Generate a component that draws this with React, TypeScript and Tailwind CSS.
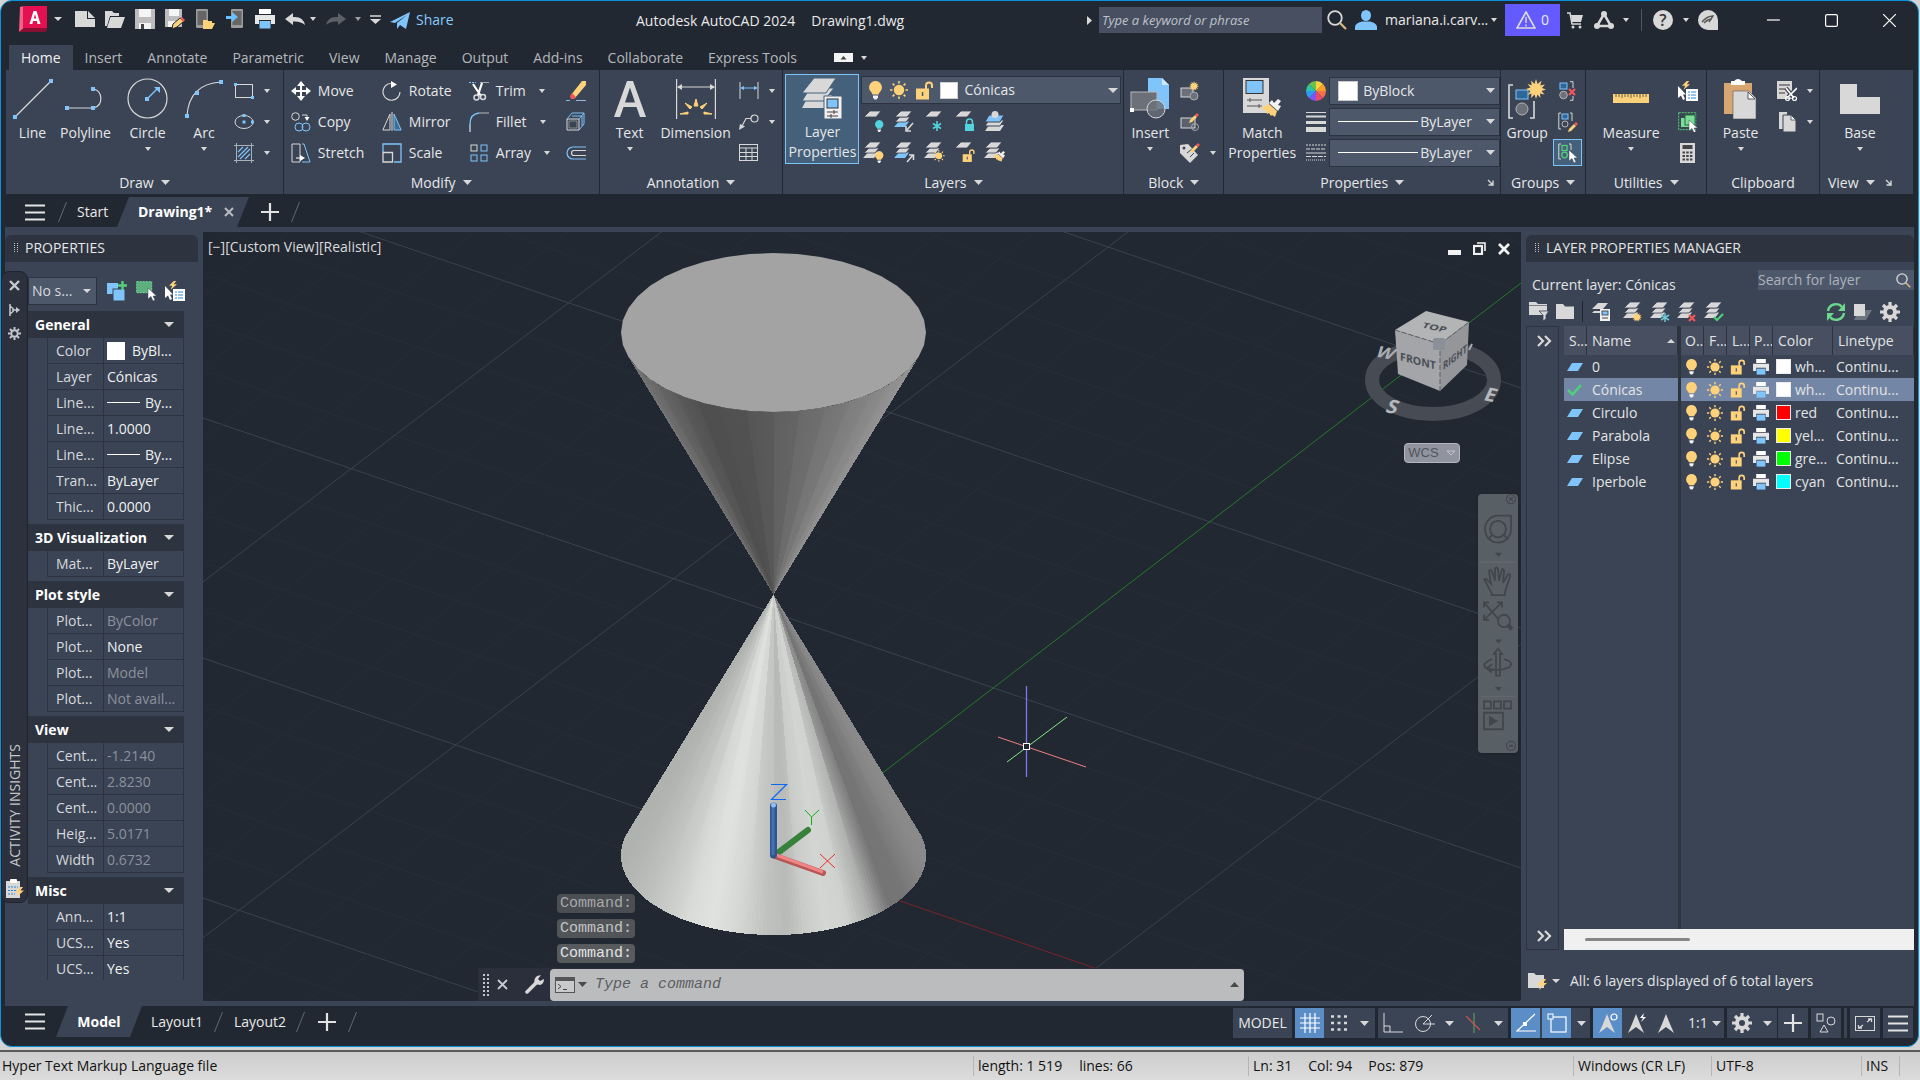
import React from "react";
import type { ReactNode } from "react";

const G = "#d8d8d8";
const B = "#7fc4fb";
const Y = "#fed27b";

type IcProps = { w: number; h: number; vb?: string; children: ReactNode; className?: string };

function Ic({ w, h, vb, children, className = "" }: IcProps) {
  return (
    <svg width={w} height={h} viewBox={vb ?? `0 0 ${w} ${h}`} fill="none" className={`shrink-0 ${className}`} aria-hidden="true">
      {children}
    </svg>
  );
}

function Down({ w = 8, h = 4, color = G }: { w?: number; h?: number; color?: string }) {
  return (
    <Ic w={w} h={h}>
      <path d={`M0 0H${w}L${w / 2} ${h}Z`} fill={color} />
    </Ic>
  );
}

/* ---------- small reusable drawings ---------- */

const Pointer = ({ x, y }: { x: number; y: number }) => (
  <path transform={`translate(${x} ${y})`} d="M0 0V11L3 8.500L5 13L7 12L5 8H8.500Z" fill="#fff" stroke="#3b4454" strokeWidth=".5" />
);

const Pencil = ({ x, y }: { x: number; y: number }) => (
  <g transform={`translate(${x} ${y})`}>
    <path d="M0 10L1 7L6 2L8 4L3 9Z" fill={Y} />
    <path d="M6 2L8 0L10 2L8 4Z" fill="#f0575b" />
  </g>
);

const Bulb = ({ x, y, c = Y, s = 1 }: { x: number; y: number; c?: string; s?: number }) => (
  <g transform={`translate(${x} ${y}) scale(${s})`}>
    <path d="M6.500 0A6.500 6.500 0 0 0 2.500 11.500L3.500 13.500H9.500L10.500 11.500A6.500 6.500 0 0 0 6.500 0Z" fill={c} />
    <path d="M4 14.500H9V16.500L7.500 18.500H5.500L4 16.500Z" fill="#f2f2f2" />
  </g>
);

const Sun = ({ x, y, s = 1 }: { x: number; y: number; s?: number }) => (
  <g transform={`translate(${x} ${y}) scale(${s})`}>
    <circle cx="9" cy="9" r="5.200" fill={Y} />
    <path d="M9 0V2.500M9 15.500V18M0 9H2.500M15.500 9H18M2.600 2.600L4.400 4.400M13.600 13.600L15.400 15.400M15.400 2.600L13.600 4.400M4.400 13.600L2.600 15.400" stroke={Y} strokeWidth="1.600" />
  </g>
);

const OpenLock = ({ x, y, s = 1 }: { x: number; y: number; s?: number }) => (
  <g transform={`translate(${x} ${y}) scale(${s})`}>
    <path d="M11 8V4.500A3 3 0 0 1 17 4.500V7" stroke={Y} strokeWidth="2" />
    <rect x="1" y="7.500" width="13" height="11" fill={Y} />
    <rect x="6.800" y="11" width="1.500" height="4" fill="#4e5a6d" />
  </g>
);

const Sheets = ({ n = 3, last = G }: { n?: number; last?: string }) => (
  <g>
    {n > 2 && <path d="M5 10.500H15L11 16H0Z" fill={last} />}
    {n > 1 && <path d="M6 6H16L12 11H1Z" fill={G} stroke="#3b4454" strokeWidth=".8" />}
    <path d="M7 0H18L13 6H1Z" fill={G} stroke="#3b4454" strokeWidth=".8" />
  </g>
);

const Star = ({ x, y, s = 1 }: { x: number; y: number; s?: number }) => (
  <path
    transform={`translate(${x} ${y}) scale(${s})`}
    d="M10 0L11.600 5L15.500 1.800L14.300 6.500L19 5.500L15.800 9L20 10.500L15.500 12L18.500 15.500L14 14.500L14.500 19L11.500 15.500L10 20L8.500 15.500L5 19L5.500 14.500L1.500 16L4.500 12L0 10L4.500 8.500L1.500 5L5.800 6.200L5 1.500L8.500 5Z"
    fill={Y}
  />
);

const Brush = ({ x, y, s = 1 }: { x: number; y: number; s?: number }) => (
  <g transform={`translate(${x} ${y}) scale(${s})`}>
    <path d="M0 9L8 5L16 12L14 18L11 16L10 17L8 14L6 15L5 12Z" fill={Y} />
    <path d="M8 4L11 1L13 4L17 0L20 2L17 6L20 7L17 12Z" fill="#f2f2f2" />
  </g>
);

const Printer = ({ s = 1 }: { s?: number }) => (
  <g transform={`scale(${s})`}>
    <rect x="4" y="0" width="12" height="5" fill="#fff" />
    <path d="M0 6H20V15H16V11H4V15H0Z" fill="#e6e6e6" />
    <rect x="4.500" y="12" width="11" height="7.500" fill={B} />
  </g>
);

const Bolt = ({ x, y, s = 1 }: { x: number; y: number; s?: number }) => (
  <path transform={`translate(${x} ${y}) scale(${s})`} d="M6 0L0 6H4L2 11L10 4H6L9 0Z" fill={Y} />
);

const Lens = ({ size }: { size: number }) => (
  <Ic w={size} h={size} vb="0 0 20 20">
    <circle cx="8" cy="8" r="6.800" stroke={G} strokeWidth="1.800" />
    <path d="M13 13L19 19" stroke="#d9b680" strokeWidth="2.200" />
  </Ic>
);

const Gear = ({ size }: { size: number }) => (
  <Ic w={size} h={size} vb="0 0 20 20">
    <circle cx="10" cy="10" r="5" stroke={G} strokeWidth="4" />
    <path d="M10 0V4M10 16V20M0 10H4M16 10H20M3 3L6 6M14 14L17 17M17 3L14 6M6 14L3 17" stroke={G} strokeWidth="3.200" />
  </Ic>
);

const QuickSelect = () => (
  <Ic w={20} h={20}>
    <Bolt x={4} y={0} s={0.8} />
    <rect x="8" y="8" width="12" height="12" fill="#fff" />
    <path d="M10 11H12M10 14H12M10 17H12M13 11H18M13 14H18M13 17H18" stroke="#2a87d8" strokeWidth="1.200" />
    <path d="M0 5V17L3 14.500L5 19L7 18L5 13.500H8Z" fill="#fff" />
  </Ic>
);

/* ---------- title bar ---------- */

const iconBtn = "flex h-[30px] w-[30px] items-center justify-center";

function TitleBar() {
  return (
    <header className="flex h-[44px] shrink-0 items-start text-sm text-[#e9e9e9]">
      <div className="flex w-[635px] shrink-0 items-center pt-[2px] pl-[18px]">
        <button aria-label="Application menu" className="mr-2 flex h-[32px] items-center gap-[6px]">
          <Ic w={29} h={26}>
            <path d="M1 1L5 0V22L0 26Z" fill="#f0648a" />
            <path d="M0 26L5 22H28V24L26 26Z" fill="#8a1033" />
            <rect x="4" y="0" width="24" height="22" fill="#e5104f" />
            <path d="M10.500 18L14.500 5H17.500L21.500 18H18.500L17.800 15H14.100L13.300 18ZM14.800 12.500H17.200L16 8Z" fill="#fff" fillRule="evenodd" />
          </Ic>
          <Down />
        </button>
        <button aria-label="New" className={iconBtn}>
          <Ic w={20} h={16}><path d="M0 0H12V8H20V16H0Z" fill={G} /><path d="M13 0L20 7H13Z" fill={G} /></Ic>
        </button>
        <button aria-label="Open" className={iconBtn}>
          <Ic w={20} h={17}><path d="M0 0H7L9 2H14V5H5L2 15H0Z" fill={G} /><path d="M5.500 6H20L16 17H2Z" fill={G} /></Ic>
        </button>
        <button aria-label="Save" className={iconBtn}>
          <Ic w={20} h={20}><path d="M0 0H20V20H0Z" fill="#bdbdbd" /><rect x="4" width="12" height="8" fill="#f5f5f5" /><path d="M4 14H16V20H4Z" fill="#f5f5f5" /><rect x="6" y="15" width="3" height="5" fill="#444" /></Ic>
        </button>
        <button aria-label="Save as" className={iconBtn}>
          <Ic w={20} h={20}><path d="M0 0H17V18H0Z" fill="#bdbdbd" /><rect x="4" width="10" height="7" fill="#f5f5f5" /><path d="M3 12H12V18H3Z" fill="#f5f5f5" /><g><path d="M7 20L8 15L15 9L19 12L12 18Z" fill={Y} stroke="#222831" /><path d="M15 9L17 8L20 11L18.500 13Z" fill="#f0575b" /></g></Ic>
        </button>
        <button aria-label="Open from mobile" className={iconBtn}>
          <Ic w={20} h={20}><rect x="1" width="12" height="19" rx="1" fill="#9b9b9b" /><rect x="2.500" y="2" width="9" height="14" fill="#666" /><path d="M8 11H12L13 12H17V14H20L17 20H8Z" fill={Y} /></Ic>
        </button>
        <button aria-label="Save to mobile" className={iconBtn}>
          <Ic w={18} h={20}><rect x="5" width="12" height="19" rx="1" fill="#9b9b9b" /><rect x="6.500" y="2" width="9" height="14" fill="#666" /><path d="M0 7H6V3L12 8L6 13V10H0Z" fill="#6cc0ff" /></Ic>
        </button>
        <button aria-label="Plot" className={iconBtn}><Ic w={20} h={20}><Printer /></Ic></button>
        <button aria-label="Undo" className={iconBtn}>
          <Ic w={20} h={13}><path d="M0 6L8 0V4Q18 3 20 12Q16 8 8 8.500V12Z" fill={G} /></Ic>
        </button>
        <Down w={6} />
        <button aria-label="Redo" className="ml-[5px] flex h-[30px] w-[30px] items-center justify-center">
          <Ic w={20} h={13}><path d="M20 6L12 0V4Q2 3 0 12Q4 8 12 8.500V12Z" fill="#5c6168" /></Ic>
        </button>
        <span className="ml-[4px]"><Down w={6} color="#a0a0a0" /></span>
        <button aria-label="Customize quick access" className="mr-[9px] ml-[8px] flex h-[30px] w-[12px] items-center justify-center">
          <Ic w={11} h={9}><path d="M0 1H11" stroke={G} strokeWidth="1.500" /><path d="M0 4H11L5.500 9Z" fill={G} /></Ic>
        </button>
        <button className="flex items-center gap-1.5 pt-[2px] text-[#86cbff]">
          <Ic w={20} h={17}><path d="M0 10L20 0L16 17L10 13L7 17V11L17 3L5 11Z" fill={B} /></Ic>
          Share
        </button>
      </div>
      <h1 className="mt-[10px] flex gap-4 font-normal whitespace-nowrap"><span>Autodesk AutoCAD 2024</span><span>Drawing1.dwg</span></h1>
      <div className="ml-auto flex items-center pt-[3px]">
        <Ic w={5} h={9} className="mr-[7px]"><path d="M0 0L5 4.500L0 9Z" fill={G} /></Ic>
        <input aria-label="Search help" placeholder="Type a keyword or phrase" className="h-[26px] w-[223px] bg-[#474f60] px-[3px] text-[13px] italic outline-none placeholder:text-[#bfc3ca]" />
        <button aria-label="Search" className="ml-[5px] flex w-[22px]"><Lens size={20} /></button>
        <button className="ml-[6px] flex items-center gap-2">
          <Ic w={22} h={20}><ellipse cx="11" cy="5.500" rx="5" ry="5.500" fill={B} /><path d="M0 20V17Q0 13 7 11.500H15Q22 13 22 17V20Z" fill={B} /></Ic>
          <span className="w-[98px] text-left">mariana.i.carv...</span>
          <Down w={6} />
        </button>
        <button className="ml-2 flex h-[32px] w-[55px] items-center justify-center gap-[5px] bg-[#635bff]">
          <Ic w={20} h={18}><path d="M10 1L19 17H1Z" stroke="#ddd" strokeWidth="1.600" /><path d="M10 6V12M10 13.500V15.500" stroke="#ddd" strokeWidth="1.400" /></Ic>
          0
        </button>
        <button aria-label="App store" className="ml-[7px]">
          <Ic w={16} h={17}><path d="M0 1H3L5 12H14" stroke={G} strokeWidth="1.500" /><path d="M4 3H16L14 10H5Z" fill={G} /><circle cx="6" cy="15" r="1.500" fill={G} /><circle cx="13" cy="15" r="1.500" fill={G} /></Ic>
        </button>
        <button aria-label="Autodesk app" className="ml-[11px] flex items-center gap-[9px]">
          <Ic w={20} h={18}><path d="M10 3L3 15H17Z" stroke={G} strokeWidth="2.500" /><circle cx="10" cy="3" r="3" fill={G} /><circle cx="3" cy="15" r="3" fill={G} /><circle cx="17" cy="15" r="3" fill={G} /></Ic>
          <Down w={6} />
        </button>
        <span className="ml-[12px] h-[22px] w-px bg-[#4d5665]" />
        <button aria-label="Help" className="ml-[11px] flex items-center gap-[10px]">
          <span className="flex h-[20px] w-[20px] items-center justify-center rounded-full bg-[#d8d8d8] text-base font-semibold text-[#333]">?</span>
          <Down w={6} />
        </button>
        <button aria-label="Assistant" className="ml-[9px]">
          <Ic w={20} h={20}><path d="M10 0A10 10 0 1 0 10 20H20V10A10 10 0 0 0 10 0Z" fill={G} /><path d="M4 12Q9 6 15 6L11 12M6 13Q10 9 14 9" stroke="#555" strokeWidth="1.400" /></Ic>
        </button>
        <button aria-label="Minimize" className="ml-[26px] flex w-[58px] justify-center"><Ic w={13} h={13}><path d="M0 6H13" stroke="#fff" strokeWidth="1.200" /></Ic></button>
        <button aria-label="Maximize" className="flex w-[58px] justify-center"><Ic w={13} h={13}><rect x=".6" y=".6" width="11.800" height="11.800" rx="1.500" stroke="#fff" strokeWidth="1.200" /></Ic></button>
        <button aria-label="Close" className="flex w-[58px] justify-center"><Ic w={13} h={13}><path d="M0 0L13 13M13 0L0 13" stroke="#fff" strokeWidth="1.200" /></Ic></button>
      </div>
    </header>
  );
}

const TABS = ["Insert", "Annotate", "Parametric", "View", "Manage", "Output", "Add-ins", "Collaborate", "Express Tools"];

function RibbonTabs() {
  return (
    <nav className="ml-[8px] flex h-[25px] shrink-0 text-sm text-[#b4b8be]">
      <button className="bg-[#3b4454] px-[12px] text-[#f0f0f0]">Home</button>
      <div className="flex gap-[25px] pl-[12px]">
        {TABS.map((t) => <button key={t}>{t}</button>)}
      </div>
      <button aria-label="Ribbon display" className="ml-[37px] flex items-center gap-[8px]">
        <Ic w={19} h={9}><rect width="19" height="9" fill="#f4f4f4" /><path d="M6.500 6.500L9.500 3L12.500 6.500Z" fill="#444" /></Ic>
        <Down w={6} />
      </button>
    </nav>
  );
}

/* ---------- ribbon ---------- */

type PanelProps = { title: string; className: string; children: ReactNode; caret?: boolean; launcher?: string; titleAlign?: string };

function Panel({ title, className, children, caret = true, launcher, titleAlign = "mx-auto" }: PanelProps) {
  return (
    <section className={`relative flex flex-col border-r border-[#222831] ${className}`}>
      <div className="flex h-[101px] pt-[4px]">{children}</div>
      <button className={`flex h-[23px] items-center gap-[7px] ${titleAlign}`}>
        {title}
        {caret && <Down w={9} h={5} />}
      </button>
      {launcher && (
        <button aria-label={`${title} settings`} className={`absolute bottom-[8px] ${launcher}`}>
          <Ic w={7} h={7}><path d="M1 1L6 6M6 1.500V6H1.500" stroke={G} strokeWidth="1.400" /></Ic>
        </button>
      )}
    </section>
  );
}

function Big({ label, w, caret = false, children }: { label: ReactNode; w: string; caret?: boolean; children: ReactNode }) {
  return (
    <button className={`flex flex-col items-center leading-[20px] ${w}`}>
      <span className="flex h-[49px] items-center justify-center">{children}</span>
      <span>{label}</span>
      {caret && <span className="mt-[4px]"><Down w={6} /></span>}
    </button>
  );
}

const rows = "mt-px grid h-[93px] grid-rows-3 items-center";

function Tool({ label, caret, children }: { label: string; caret?: boolean; children: ReactNode }) {
  return (
    <button className="flex items-center justify-start">
      <span className="mr-[7px] flex w-[20px] justify-center">{children}</span>
      {label}
      {caret && <span className="ml-[13px]"><Down w={6} /></span>}
    </button>
  );
}

function IconCaret({ label, children, caret = true }: { label: string; children: ReactNode; caret?: boolean }) {
  return (
    <button aria-label={label} className="flex items-center gap-[10px]">
      <span className="flex w-[20px] justify-center">{children}</span>
      {caret && <Down w={6} />}
    </button>
  );
}

function DrawPanel() {
  return (
    <Panel title="Draw" className="w-[278px]">
      <Big label="Line" w="w-[53px]">
        <Ic w={42} h={40}><path d="M3 38L39 2" stroke={G} strokeWidth="1.200" /><rect x="1" y="36" width="4" height="4" fill={B} /><rect x="37" y="0" width="4" height="4" fill={B} /></Ic>
      </Big>
      <Big label="Polyline" w="w-[53px]">
        <Ic w={42} h={26}><path d="M2 22H29A10 10 0 0 0 29 3" stroke={G} strokeWidth="1.200" /><rect x="0" y="20" width="4" height="4" fill={B} /><rect x="26" y="20" width="4" height="4" fill={B} /><rect x="26" y="1" width="4" height="4" fill={B} /></Ic>
      </Big>
      <Big label="Circle" w="w-[71px]" caret>
        <Ic w={41} h={41}><circle cx="20.500" cy="20.500" r="19.500" stroke={G} strokeWidth="1.200" /><path d="M20 21L31 10" stroke={B} strokeWidth="1.400" /><path d="M27 9H33V15Z" fill={B} /><rect x="18" y="19" width="4" height="4" fill={B} /></Ic>
      </Big>
      <Big label="Arc" w="w-[42px]" caret>
        <Ic w={38} h={40}><path d="M2 37Q4 5 36 3" stroke={G} strokeWidth="1.200" /><rect x="0" y="35" width="4" height="4" fill={B} /><rect x="10" y="12" width="4" height="4" fill={B} /><rect x="34" y="1" width="4" height="4" fill={B} /></Ic>
      </Big>
      <div className={`${rows} ml-[9px]`}>
        <IconCaret label="Rectangle"><Ic w={20} h={16}><rect x="1.500" y="1.500" width="17" height="13" stroke={G} /><rect width="3" height="3" fill={B} /><rect x="17" y="13" width="3" height="3" fill={B} /></Ic></IconCaret>
        <IconCaret label="Ellipse"><Ic w={20} h={16}><ellipse cx="10" cy="8" rx="9" ry="6.500" stroke={G} /><rect x="8.500" y="0" width="3" height="3" fill={B} /><rect x="8.500" y="6.500" width="3" height="3" fill={B} /><rect x="17" y="6.500" width="3" height="3" fill={B} /></Ic></IconCaret>
        <IconCaret label="Hatch"><Ic w={20} h={20}><path d="M2.500 0V20M17.500 0V20M0 2.500H20M0 17.500H20" stroke="#aab0b8" /><path d="M4 9L9 4M4 14L14 4M6 16L16 6M11 16L16 11" stroke={B} strokeWidth="1.200" /></Ic></IconCaret>
      </div>
    </Panel>
  );
}

function ModifyPanel() {
  return (
    <Panel title="Modify" className="w-[316px]">
      <div className={`${rows} w-full grid-cols-[91px_87px_97px_22px] pl-[7px]`}>
        <Tool label="Move"><Ic w={20} h={20}><path d="M10 2V18M2 10H18" stroke="#fff" strokeWidth="2" /><path d="M10 0L14 5H6ZM10 20L6 15H14ZM0 10L5 6V14ZM20 10L15 14V6Z" fill="#fff" /></Ic></Tool>
        <Tool label="Rotate"><Ic w={19} h={20}><path d="M6 3A8.500 8.500 0 1 0 18 11" stroke={G} strokeWidth="1.200" /><path d="M6 3Q9 2 10 3" stroke={G} /><path d="M9 0L15 3.500L9 7Z" fill="#fff" /></Ic></Tool>
        <Tool label="Trim" caret><Ic w={20} h={20}><path d="M0 1.500H7" stroke={B} strokeDasharray="2 1" /><path d="M11 1.500H20" stroke="#aaa" /><path d="M4 3L12 15M13 2L9 14" stroke="#fff" strokeWidth="2.200" /><circle cx="7.500" cy="16.500" r="2.500" stroke={G} strokeWidth="1.500" /><circle cx="14" cy="16" r="2.500" stroke={G} strokeWidth="1.500" /></Ic></Tool>
        <button aria-label="Erase"><Ic w={20} h={20}><path d="M5 14L16 0H20V4L9 17Z" fill={Y} /><path d="M4 15L6 12L10 16L8 18H5Z" fill="#f0575b" /><path d="M0 19.500H4M10 19.500H20" stroke="#8fb8dc" /></Ic></button>
        <Tool label="Copy"><Ic w={20} h={20}><circle cx="4.500" cy="4.500" r="3.800" stroke={G} /><path d="M11 3H16V6" stroke={G} /><path d="M13.500 5H18.500L16 9Z" fill="#fff" /><circle cx="8" cy="15" r="4" stroke={B} /><circle cx="15" cy="15" r="4" stroke={B} /></Ic></Tool>
        <Tool label="Mirror"><Ic w={20} h={19}><path d="M8 2V18H.8Z" stroke={G} /><path d="M12 2V18H19.200Z" stroke={B} fill="#3f6e94" /><path d="M10 0V19" stroke="#ddd" /></Ic></Tool>
        <Tool label="Fillet" caret><Ic w={20} h={20}><path d="M1 20V12Q1 2 10 1" stroke={B} strokeWidth="1.300" /><path d="M10 1H20M1 12V20" stroke="#b8b8b8" /></Ic></Tool>
        <button aria-label="Explode"><Ic w={20} h={20}><path d="M1 7H13V18H1Z" stroke={G} /><path d="M3 9H11V16H3Z" stroke="#888" /><path d="M1 7L6 1H18L13 7M18 1V12L13 18M6 4H16M16 4V14" stroke={B} /></Ic></button>
        <Tool label="Stretch"><Ic w={20} h={20}><path d="M1 1H9V19H1Z" stroke={G} /><path d="M11 1H13L19 19H11" stroke={B} /><path d="M5 15H10" stroke="#fff" /><path d="M9 12L14 15L9 18Z" fill="#fff" /></Ic></Tool>
        <Tool label="Scale"><Ic w={20} h={20}><path d="M1 9V1H19V19H12" stroke={B} strokeWidth="1.300" /><path d="M1 9.500H10.500V19H1Z" stroke={G} strokeWidth="1.300" /></Ic></Tool>
        <Tool label="Array" caret><Ic w={18} h={18}><rect x="1" y="1" width="6" height="6" stroke={G} /><rect x="11" y="1" width="6" height="6" stroke={B} /><rect x="1" y="11" width="6" height="6" stroke={B} /><rect x="11" y="11" width="6" height="6" stroke={B} /></Ic></Tool>
        <button aria-label="Offset"><Ic w={20} h={14}><path d="M20 1H7A6 6 0 0 0 7 13H20" stroke={B} strokeWidth="1.200" /><path d="M20 4.500H8A2.500 2.500 0 0 0 8 9.500H20" stroke={G} strokeWidth="1.200" /></Ic></button>
      </div>
    </Panel>
  );
}

function AnnotationPanel() {
  return (
    <Panel title="Annotation" className="w-[184px]">
      <Big label="Text" w="w-[60px]" caret>
        <Ic w={32} h={36}><path d="M0 36L13 0H19L32 36H26L22.500 26H9.500L6 36ZM11 21.500H21L16 6.500Z" fill={G} fillRule="evenodd" /></Ic>
      </Big>
      <Big label="Dimension" w="w-[72px]">
        <Ic w={40} h={40}><path d="M.6 0V40M39.400 0V40M2 8H38" stroke={G} strokeWidth="1.200" /><path d="M1 8L6 5V11ZM39 8L34 5V11Z" fill={G} /><path d="M18 27L20 20L22 27ZM9 24L14 30L16 28ZM31 24L26 30L24 28ZM4 35L12 33V35ZM36 35L28 33V35Z" fill={Y} stroke={Y} /></Ic>
      </Big>
      <div className={`${rows} ml-[7px]`}>
        <IconCaret label="Linear"><Ic w={20} h={17}><path d="M1 0V17M19 0V17" stroke={G} /><path d="M3 6H17" stroke={B} /><path d="M1 6L5 4V8ZM19 6L15 4V8Z" fill={B} /></Ic></IconCaret>
        <IconCaret label="Leader"><Ic w={20} h={16}><circle cx="15.500" cy="4.500" r="3.500" stroke={G} strokeWidth="1.200" /><path d="M12 4.500H7L3 12" stroke={G} strokeWidth="1.200" /><path d="M0 16L1 10L6 12.500Z" fill={G} /></Ic></IconCaret>
        <IconCaret label="Table" caret={false}><Ic w={19} h={17}><rect x=".5" y=".5" width="18" height="16" stroke={G} /><path d="M0 4H19M0 8.500H19M0 12.500H19M7 4V17M13 4V17" stroke={G} /></Ic></IconCaret>
      </div>
    </Panel>
  );
}

const Freeze = () => <path d="M13 10V20M9 12.500L17 17.500M17 12.500L9 17.500" stroke="#53d3de" strokeWidth="1.600" />;

function LayersPanel() {
  return (
    <Panel title="Layers" className="w-[341px]">
      <button className="ml-[2px] flex h-[90px] w-[74px] flex-col items-center border border-[#7cc3f8] bg-[#45607a] pt-[3px] leading-[20px]">
        <Ic w={40} h={42}>
          <path d="M7 17H30L22 30H0Z" fill={G} /><path d="M8 10H32L22 23H0Z" fill={G} stroke="#45607a" /><path d="M12 0H34L24 15H0Z" fill={G} stroke="#45607a" />
          <rect x="22" y="18" width="18" height="23" fill="#f0f0f0" stroke="#45607a" /><rect x="25" y="21" width="11" height="9" fill={B} stroke="#333" /><path d="M25 34H36M25 38H36M32 32V36M29 36V40" stroke="#444" />
        </Ic>
        <span className="mt-[2px]">Layer<br />Properties</span>
      </button>
      <div className="ml-[2px] grow">
        <div className="mt-[2px] mr-[2px] flex h-[28px] items-center border border-[#2c3340] bg-[#4d586b] pr-[2px] pl-[7px]">
          <Ic w={13} h={19}><Bulb x={0} y={0} /></Ic>
          <Ic w={19} h={19} className="ml-[8px]"><Sun x={0} y={0} /></Ic>
          <Ic w={18} h={19} className="ml-[6px]"><OpenLock x={0} y={0} /></Ic>
          <span className="ml-[7px] h-[17px] w-[18px] border border-[#d0d0d0] bg-white" />
          <select aria-label="Current layer" className="ml-[6px] grow appearance-none bg-transparent outline-none"><option>Cónicas</option></select>
          <Down w={10} h={5} />
        </div>
        <div className="ml-[2px] grid w-[151px] grid-cols-5 grid-rows-2 gap-y-[10px] pt-[7px]">
          <button aria-label="Layer off"><Ic w={21} h={21}><Sheets n={1} /><Bulb x={12} y={9} s={0.65} c="#53d3de" /></Ic></button>
          <button aria-label="Isolate"><Ic w={21} h={21}><Sheets last={B} /><path d="M19 12L13 19M12 15V20H17" stroke={G} strokeWidth="1.600" /></Ic></button>
          <button aria-label="Freeze"><Ic w={21} h={21}><Sheets n={1} /><Freeze /></Ic></button>
          <button aria-label="Lock"><Ic w={21} h={21}><Sheets n={1} /><rect x="11" y="13" width="9" height="7" fill="#53d3de" /><path d="M12.500 13V11A3 3 0 0 1 18.500 11V13" stroke="#53d3de" strokeWidth="1.500" /></Ic></button>
          <button aria-label="Make current"><Ic w={21} h={21}><path d="M5 14H20L16 20H1Z" fill={G} /><path d="M5 9H20L16 15H1Z" fill={G} stroke="#3b4454" /><path d="M5 4H20L16 11H1Z" fill={B} stroke="#3b4454" /><circle cx="11" cy="3.500" r="3.500" fill={G} /></Ic></button>
          <button aria-label="All on"><Ic w={21} h={21}><Sheets /><Bulb x={12} y={9} s={0.65} /></Ic></button>
          <button aria-label="Unisolate"><Ic w={21} h={21}><Sheets last={B} /><path d="M13 20L19 13M15 13H19.500V18" stroke={G} strokeWidth="1.600" /></Ic></button>
          <button aria-label="Thaw"><Ic w={21} h={21}><Sheets /><Sun x={9} y={8} s={0.65} /></Ic></button>
          <button aria-label="Unlock"><Ic w={21} h={21}><Sheets n={1} /><OpenLock x={8} y={7} s={0.7} /></Ic></button>
          <button aria-label="Match layer"><Ic w={21} h={21}><Sheets /><Brush x={9} y={9} s={0.6} /></Ic></button>
        </div>
      </div>
    </Panel>
  );
}

function BlockPanel() {
  return (
    <Panel title="Block" className="w-[100px]">
      <Big label="Insert" w="w-[52px]" caret>
        <Ic w={40} h={42}><path d="M18 0H32L39 7V31H18Z" fill={B} /><path d="M32 0V7H39Z" fill="#cde8ff" /><rect x="1" y="14" width="26" height="18" fill="#6b7079" stroke="#b8b8b8" /><circle cx="26" cy="31" r="9" fill="#6b7079cc" stroke={G} /><rect x="0" y="30" width="4" height="4" fill="#fff" /></Ic>
      </Big>
      <div className={`${rows} ml-[4px]`}>
        <IconCaret label="Create block" caret={false}><Ic w={20} h={20}><rect x="1" y="7" width="12" height="9" fill="#6b7079" stroke={G} /><circle cx="14" cy="15" r="4" fill="#6b7079" stroke="#aaa" /><Star x={9} y={0} s={0.5} /></Ic></IconCaret>
        <IconCaret label="Edit block" caret={false}><Ic w={20} h={20}><rect x="1" y="6" width="14" height="10" fill="#5b616c" stroke={G} /><circle cx="15" cy="15" r="3.500" stroke="#aaa" /><Pencil x={9} y={1} /></Ic></IconCaret>
        <IconCaret label="Edit attributes"><Ic w={20} h={20}><path d="M0 2L8 1L18 12L10 20L0 10Z" fill={G} /><circle cx="4" cy="5" r="1.500" fill="#3b4454" /><path d="M7 10L12 6M10 14L14 10" stroke="#3b4454" /><Pencil x={10} y={0} /></Ic></IconCaret>
      </div>
    </Panel>
  );
}

const WHEEL = ["#f9d13f", "#f5a12b", "#f4724a", "#e8496a", "#7d53f2", "#2f9af3", "#2fc3a5", "#6cc14b"];

function PropCombo({ label, value, children }: { label: string; value: string; children: ReactNode }) {
  return (
    <div className="flex h-[28px] w-[171px] items-center border border-[#2c3340] bg-[#4d586b] pr-[4px] pl-[8px]">
      {children}
      <select aria-label={label} className="grow appearance-none bg-transparent outline-none"><option>{value}</option></select>
      <Down w={9} h={5} />
    </div>
  );
}

function PropertiesRibbonPanel() {
  return (
    <Panel title="Properties" className="w-[277px]" launcher="right-[6px]">
      <button className="ml-[2px] flex w-[80px] flex-col items-center pt-[4px] leading-[20px]">
        <Ic w={40} h={40}><rect x="1" width="26" height="35" fill={G} /><rect x="4" y="2.500" width="17" height="13" fill={B} stroke="#333" /><path d="M5 22H20M5 28H20M8 20V24M17 26V30" stroke="#555" /><Brush x={19} y={21} /></Ic>
        <span className="mt-[5px]">Match<br />Properties</span>
      </button>
      <div className="mt-px ml-[8px] grid h-[93px] grid-cols-[20px_1fr] grid-rows-3 items-center gap-x-[3px]">
        <Ic w={20} h={20}>
          {WHEEL.map((c, i) => {
            const a = (i * Math.PI) / 4, b = ((i + 1) * Math.PI) / 4;
            return <path key={c} d={`M10 10L${10 + 10 * Math.sin(a)} ${10 - 10 * Math.cos(a)}A10 10 0 0 1 ${10 + 10 * Math.sin(b)} ${10 - 10 * Math.cos(b)}Z`} fill={c} />;
          })}
        </Ic>
        <PropCombo label="Object color" value="ByBlock"><span className="mr-[5px] h-[20px] w-[20px] border border-[#ccc] bg-white" /></PropCombo>
        <Ic w={20} h={20}><path d="M0 .5H20" stroke={G} /><path d="M0 4.500H20" stroke={G} strokeWidth="2" /><path d="M0 10.500H20" stroke={G} strokeWidth="3" /><path d="M0 17.500H20" stroke={G} strokeWidth="5" /></Ic>
        <PropCombo label="Lineweight" value="ByLayer"><span className="mr-[2px] h-px w-[80px] bg-white" /></PropCombo>
        <Ic w={20} h={17}><path d="M0 1H20" stroke={G} strokeDasharray="2 1" /><path d="M0 5H20" stroke={G} strokeDasharray="4 1" /><path d="M0 9H20" stroke={G} /><path d="M0 12.500H20" stroke={G} strokeDasharray="5 1" /><path d="M0 16H20" stroke={G} strokeDasharray="1 1" /></Ic>
        <PropCombo label="Linetype" value="ByLayer"><span className="mr-[2px] h-px w-[80px] bg-white" /></PropCombo>
      </div>
    </Panel>
  );
}

function GroupsPanel() {
  return (
    <Panel title="Groups" className="w-[85px]">
      <Big label="Group" w="w-[52px]">
        <Ic w={40} h={40}><path d="M6 6H2V39H6M23 39H27V22" stroke={G} strokeWidth="1.600" /><rect x="9" y="11" width="12" height="9" fill="#2f6797" stroke={B} /><circle cx="15" cy="30" r="6" fill="#6b7079" stroke="#b5b5b5" /><Star x={19} y={0} /></Ic>
      </Big>
      <div className={rows}>
        <button aria-label="Ungroup" className="flex w-[29px] justify-center"><Ic w={20} h={20}><rect x="2" y="2" width="7" height="6" stroke={B} fill="#2f6797" /><circle cx="5.500" cy="14" r="3.800" stroke="#b5b5b5" fill="#6b7079" /><path d="M12 .7H15V7M15 15V19.300H12" stroke={G} /><path d="M11 8L17 14M17 8L11 14" stroke="#f0575b" strokeWidth="2.200" /></Ic></button>
        <button aria-label="Group edit" className="flex w-[29px] justify-center"><Ic w={20} h={20}><path d="M3 1H.8V17H3M12 1H14V9" stroke={G} /><rect x="4" y="2" width="6" height="5" stroke={B} fill="#2f6797" /><circle cx="7" cy="12" r="3" stroke="#b5b5b5" /><Pencil x={10} y={10} /></Ic></button>
        <button aria-label="Group selection" className="flex h-[27px] w-[29px] items-center justify-center border border-[#7cc3f8] bg-[#45607a]"><Ic w={20} h={20}><path d="M3 1H.8V16H3M11 1H13V7" stroke={G} /><rect x="4" y="2.500" width="5" height="5" stroke="#55cf7a" strokeWidth="1.300" /><circle cx="6.500" cy="12" r="2.800" stroke="#55cf7a" strokeWidth="1.300" /><Pointer x={11} y={7} /></Ic></button>
      </div>
    </Panel>
  );
}

function UtilitiesPanel() {
  return (
    <Panel title="Utilities" className="w-[121px]">
      <Big label="Measure" w="w-[90px]" caret>
        <Ic w={36} h={9}><rect width="36" height="9" fill={Y} /><path d="M3 0V3M6 0V3M9 0V4M12 0V3M15 0V3M18 0V4M21 0V3M24 0V3M27 0V4M30 0V3M33 0V3" stroke="#4a4436" strokeWidth=".8" /></Ic>
      </Big>
      <div className={`${rows} ml-[2px]`}>
        <button aria-label="Quick select"><QuickSelect /></button>
        <button aria-label="Select all"><Ic w={20} h={20}><rect x=".7" y=".7" width="17" height="17" stroke="#55cf7a" strokeDasharray="2 1" /><rect x="3" y="6" width="9" height="9" fill="#79dd97" /><rect x="7" y="3" width="10" height="10" fill="#79dd97" stroke="#2a6b40" /><Pointer x={11} y={8} /></Ic></button>
        <button aria-label="Calculator"><Ic w={20} h={20}><rect x="2" width="15" height="20" fill={G} /><rect x="4.500" y="2" width="10" height="4" fill="#444" /><path d="M4.500 9.500H15M4.500 13H15M4.500 16.500H15" stroke="#444" strokeWidth="2" strokeDasharray="2.500 1.200" /></Ic></button>
      </div>
    </Panel>
  );
}

function ClipboardPanel() {
  return (
    <Panel title="Clipboard" className="w-[113px]" caret={false}>
      <Big label="Paste" w="w-[67px]" caret>
        <Ic w={33} h={40}><path d="M0 4H28V35H0Z" fill="#d8a671" /><path d="M7 4V2H10Q14 -2 18 2H21V6H7Z" fill="#fff" /><path d="M9 12H25L32 19V40H9Z" fill={G} stroke="#555" strokeWidth=".6" /><path d="M24 13V20H31Z" fill="#fff" stroke="#333" strokeWidth=".8" /></Ic>
      </Big>
      <div className={`${rows} ml-[3px]`}>
        <IconCaret label="Cut"><Ic w={20} h={20}><rect width="15" height="18" fill={G} /><path d="M2 4H13M2 8H12M2 12H8" stroke="#333" /><path d="M9 7L17 17M20 7L11 16" stroke="#3b4454" strokeWidth="4" /><path d="M9 7L17 17M20 7L11 16" stroke="#fff" strokeWidth="1.600" /><circle cx="10.500" cy="17.500" r="2" stroke="#fff" strokeWidth="1.200" /><circle cx="17.500" cy="17.500" r="2" stroke="#fff" strokeWidth="1.200" /></Ic></IconCaret>
        <IconCaret label="Copy clip"><Ic w={17} h={20}><path d="M0 0H8V17H0Z" fill={G} /><path d="M4 3H12L17 8V20H4Z" fill={G} stroke="#3b4454" /><path d="M12 3V8H17Z" fill="#fff" stroke="#3b4454" strokeWidth=".8" /></Ic></IconCaret>
      </div>
    </Panel>
  );
}

function ViewPanel() {
  return (
    <Panel title="View" className="min-w-[93px] flex-1 border-r-0" launcher="right-[21px]" titleAlign="ml-[8px]">
      <Big label="Base" w="w-[80px]" caret>
        <Ic w={40} h={30}><path d="M0 0H17V13H40V30H0Z" fill={G} /></Ic>
      </Big>
    </Panel>
  );
}

function Ribbon() {
  return (
    <div className="mx-[5px] flex h-[124px] shrink-0 bg-[#3b4454] text-sm text-[#e6e7e9]">
      <DrawPanel /><ModifyPanel /><AnnotationPanel /><LayersPanel /><BlockPanel />
      <PropertiesRibbonPanel /><GroupsPanel /><UtilitiesPanel /><ClipboardPanel /><ViewPanel />
    </div>
  );
}

/* ---------- tab strips ---------- */

const Burger = ({ w = 20 }: { w?: number }) => (
  <Ic w={w} h={17}><path d={`M0 1.500H${w}M0 8.500H${w}M0 15.500H${w}`} stroke="#e3e3e3" strokeWidth="2.200" /></Ic>
);
const Slash = () => <Ic w={9} h={20}><path d="M8.500 0L.5 20" stroke="#5e6878" /></Ic>;
const Plus = () => <Ic w={18} h={18}><path d="M9 0V18M0 9H18" stroke="#e3e3e3" strokeWidth="2.200" /></Ic>;

function DocTabs() {
  return (
    <div className="flex h-[33px] shrink-0 items-end pl-[24px] text-sm text-[#e9e9e9]">
      <div className="flex h-[30px] items-center">
        <button aria-label="Drawings menu"><Burger /></button>
        <span className="ml-[13px]"><Slash /></span>
        <button className="ml-[10px] w-[31px]">Start</button>
      </div>
      <div className="ml-[9px] flex h-[30px] w-[132px] items-center bg-[#3b4454] pl-[21px] [clip-path:polygon(12px_0,100%_0,calc(100%-12px)_100%,0_100%)]">
        <button className="font-bold text-white">Drawing1*</button>
        <button aria-label="Close tab" className="ml-[12px]"><Ic w={10} h={10}><path d="M1 1L9 9M9 1L1 9" stroke="#b9bdc3" strokeWidth="2" /></Ic></button>
      </div>
      <div className="flex h-[30px] items-center">
        <button aria-label="New tab" className="mr-[12px] ml-[12px]"><Plus /></button>
        <Slash />
      </div>
    </div>
  );
}

/* ---------- left palette ---------- */

type Row = { k: string; v: string; dim?: boolean; pre?: "swatch" | "line" };
const SECTIONS: { title: string; rows: Row[] }[] = [
  { title: "General", rows: [
    { k: "Color", v: "ByBl...", pre: "swatch" }, { k: "Layer", v: "Cónicas" }, { k: "Line...", v: "By...", pre: "line" },
    { k: "Line...", v: "1.0000" }, { k: "Line...", v: "By...", pre: "line" }, { k: "Tran...", v: "ByLayer" }, { k: "Thic...", v: "0.0000" } ] },
  { title: "3D Visualization", rows: [{ k: "Mat...", v: "ByLayer" }] },
  { title: "Plot style", rows: [
    { k: "Plot...", v: "ByColor", dim: true }, { k: "Plot...", v: "None" }, { k: "Plot...", v: "Model", dim: true }, { k: "Plot...", v: "Not avail...", dim: true } ] },
  { title: "View", rows: [
    { k: "Cent...", v: "-1.2140", dim: true }, { k: "Cent...", v: "2.8230", dim: true }, { k: "Cent...", v: "0.0000", dim: true },
    { k: "Heig...", v: "5.0171", dim: true }, { k: "Width", v: "0.6732", dim: true } ] },
  { title: "Misc", rows: [{ k: "Ann...", v: "1:1" }, { k: "UCS...", v: "Yes" }, { k: "UCS...", v: "Yes" }] },
];

const Grip = () => <Ic w={4} h={10}><path d="M.5 0V10M3.500 0V10" stroke="#c3c7cc" strokeDasharray="1 1" /></Ic>;

function ActivityBar() {
  return (
    <aside className="absolute top-[44px] -left-[4px] z-10 flex h-[632px] w-[27px] flex-col items-center rounded-lg border border-[#1f242c] bg-[#2c313d] pt-[8px]">
      <button aria-label="Close palette"><Ic w={11} h={11}><path d="M1 1L10 10M10 1L1 10" stroke="#c6cad0" strokeWidth="2.400" /></Ic></button>
      <button aria-label="Auto-hide" className="mt-[13px]"><Ic w={11} h={12}><path d="M1 0V12M1 2L4 4.500V7.500L1 10M4 6H9" stroke="#c6cad0" strokeWidth="1.500" /><path d="M7 3L11 6L7 9Z" fill="#c6cad0" /></Ic></button>
      <button aria-label="Palette settings" className="mt-[11px]"><Ic w={13} h={13} vb="0 0 20 20"><circle cx="10" cy="10" r="5" stroke="#c6cad0" strokeWidth="3" /><path d="M10 0V4M10 16V20M0 10H4M16 10H20M3 3L6 6M14 14L17 17M17 3L14 6M6 14L3 17" stroke="#c6cad0" strokeWidth="3" /></Ic></button>
      <span className="mt-auto rotate-180 text-sm leading-[20px] whitespace-nowrap text-[#c3c6cb] [writing-mode:vertical-rl]">ACTIVITY INSIGHTS</span>
      <span className="mt-[12px] mb-[4px]">
        <Ic w={18} h={19}><rect y="2" width="14" height="17" fill={G} /><rect x="4" width="7" height="4" rx="1" fill="#fff" /><path d="M2 8H12M2 11.500H10M2 15H9" stroke="#2a87d8" strokeDasharray="2 1" /><Bolt x={9} y={8} s={0.9} /></Ic>
      </span>
    </aside>
  );
}

function PropertiesPalette() {
  return (
    <div className="relative flex w-[198px] shrink-0 flex-col overflow-visible text-sm text-[#d6d9dd]">
      <ActivityBar />
      <h2 className="mt-[8px] mr-[5px] flex h-[27px] items-center gap-[7px] rounded-t-md bg-[#2e343f] pb-[2px] pl-[9px] font-normal text-[#e6e7e9]"><Grip />PROPERTIES</h2>
      <div className="flex h-[49px] items-center pt-[9px] pl-[23px]">
        <div className="flex h-[28px] w-[69px] items-center border border-[#2c3340] bg-[#4d586b] pr-[5px] pl-[3px]">
          <select aria-label="Selection" className="grow appearance-none bg-transparent outline-none"><option>No s...</option></select>
          <Down />
        </div>
        <div className="ml-[10px] flex gap-[9px]">
          <button aria-label="Toggle pickadd"><Ic w={20} h={20}><rect y="2" width="11" height="11" fill={B} /><rect x="6" y="8" width="12" height="12" fill={B} stroke="#3b4454" /><path d="M15.500 0V9M11 4.500H20" stroke="#55cf7a" strokeWidth="2.400" /></Ic></button>
          <button aria-label="Select objects"><Ic w={20} h={20}><rect x=".7" y=".7" width="15" height="11" fill="#5fae7d" stroke="#6fe096" strokeDasharray="2 1" /><Pointer x={12} y={7} /></Ic></button>
          <button aria-label="Quick select"><QuickSelect /></button>
        </div>
      </div>
      <div className="h-[669px] overflow-hidden pl-[23px]">
        {SECTIONS.map((s) => (
          <section key={s.title} className="mb-[4px] w-[156px]">
            <h3><button className="flex h-[27px] w-full items-center justify-between bg-[#2e343f] pr-[10px] pl-[7px] font-bold text-white">{s.title}<Down w={10} h={5} /></button></h3>
            <table className="ml-[19px] w-[137px] table-fixed border-separate border-spacing-0">
              <tbody>
                {s.rows.map((r, i) => (
                  <tr key={i} className="h-[26px]">
                    <th scope="row" className="w-[57px] border-x border-b border-[#2e343f] p-0 pl-[8px] text-left font-normal whitespace-nowrap">{r.k}</th>
                    <td className={r.dim ? "border-r border-b border-[#2e343f] p-0 pl-[3px] whitespace-nowrap text-[#8b919c]" : "border-r border-b border-[#2e343f] p-0 pl-[3px] whitespace-nowrap text-[#f0f1f2]"}>
                      <span className="flex items-center">
                        {r.pre === "swatch" && <span className="mr-[7px] h-[18px] w-[18px] bg-white" />}
                        {r.pre === "line" && <span className="mr-[5px] h-px w-[33px] bg-white" />}
                        {r.v}
                      </span>
                    </td>
                  </tr>
                ))}
              </tbody>
            </table>
          </section>
        ))}
      </div>
    </div>
  );
}

/* ---------- drawing area ---------- */

const CX = 773.5, RX = 152.5, RY = 79.5, APEX = 594.5, TOP = 332.5, BOTTOM = 855.5;

type Stop = [number, number[]];
const LOWER: Stop[] = [
  [621, [176, 178, 176]], [640, [186, 188, 186]], [660, [198, 200, 198]], [690, [218, 220, 217]], [712, [224, 226, 223]], [738, [212, 215, 212]],
  [765, [192, 195, 192]], [787, [183, 186, 183]], [805, [200, 203, 199]], [826, [212, 214, 211]], [848, [208, 210, 207]], [870, [172, 174, 172]],
  [890, [116, 116, 116]], [905, [118, 118, 118]], [926, [138, 138, 138]],
];
const UPPER: Stop[] = [
  [621, [122, 122, 122]], [640, [112, 112, 112]], [664, [98, 98, 98]], [700, [78, 78, 78]], [745, [82, 82, 82]],
  [773, [93, 93, 93]], [843, [120, 120, 120]], [900, [144, 144, 144]], [926, [150, 150, 150]],
];

function shade(stops: Stop[], x: number) {
  const found = stops.findIndex(([sx]) => sx >= x);
  const i = Math.max(1, found === -1 ? stops.length - 1 : found);
  const [x0, c0] = stops[i - 1];
  const [x1, c1] = stops[i];
  const t = Math.min(1, Math.max(0, (x - x0) / (x1 - x0)));
  return `rgb(${c0.map((v, k) => Math.round(v + (c1[k] - v) * t)).join(",")})`;
}

const rim = (deg: number, cy: number) => [CX + RX * Math.cos((deg * Math.PI) / 180), cy + RY * Math.sin((deg * Math.PI) / 180)];
const rimX = (a: number) => (a < 0 ? CX + RX : a > 180 ? CX - RX : rim(a, 0)[0]);

function Wedge({ a, b, cy, fill }: { a: number; b: number; cy: number; fill: string }) {
  const [x0, y0] = rim(a, cy);
  const [x1, y1] = rim(b, cy);
  return <path d={`M${CX} ${APEX}L${x0.toFixed(1)} ${y0.toFixed(1)}L${x1.toFixed(1)} ${y1.toFixed(1)}Z`} fill={fill} />;
}

/* Smooth shading along the rim, with flat facets that fade out away from the apex. */
function Cone({ id, cy, from, to, stops }: { id: string; cy: number; from: number; to: number; stops: Stop[] }) {
  const slices: number[] = [];
  for (let a = from; a < to; a += 1.5) slices.push(a);
  const facets: number[] = [];
  for (let a = 0; a < 180; a += 10) facets.push(a);
  return (
    <g shapeRendering="crispEdges">
      {slices.map((a) => <Wedge key={a} a={a} b={Math.min(to, a + 2.2)} cy={cy} fill={shade(stops, rimX(a + 0.75))} />)}
      {facets.map((a) => {
        const s = Math.max(a, from), e = Math.min(a + 10, to);
        const c = shade(stops, rimX(a + 5));
        return (
          <g key={`f${a}`}>
            <radialGradient id={`${id}${a}`} gradientUnits="userSpaceOnUse" cx={CX} cy={APEX} r="300">
              <stop offset="0" stopColor={c} />
              <stop offset=".35" stopColor={c} stopOpacity=".75" />
              <stop offset="1" stopColor={c} stopOpacity="0" />
            </radialGradient>
            <Wedge a={s} b={e} cy={cy} fill={`url(#${id}${a})`} />
          </g>
        );
      })}
    </g>
  );
}

function Grid() {
  const lines: ReactNode[] = [];
  for (let i = -20; i < 22; i++) {
    if (i === 10) continue;
    const y = 177 + i * 48;
    lines.push(<path key={`a${i}`} d={`M200 ${y}L1521 ${y + 451}`} stroke={i % 5 === 0 ? "#39424f" : "#262d38"} />);
  }
  for (let i = -1; i < 27; i++) {
    if (i === 15) continue;
    const y = 228 + i * 71.2;
    lines.push(<path key={`b${i}`} d={`M200 ${y}L1521 ${y - 1008}`} stroke={i % 5 === 0 ? "#39424f" : "#262d38"} />);
  }
  return <g>{lines}</g>;
}

function Scene() {
  return (
    <svg viewBox="203 232 1318 769" preserveAspectRatio="xMinYMin slice" className="absolute inset-0 h-full w-full" fill="none" aria-label="Double cone model">
      <Grid />
      <path d="M200 657L773 854" stroke="#39424f" />
      <path d="M773 857L1521 283" stroke="#257a28" />
      <path d="M773 857L1190 1001" stroke="#7c2329" />
      <Cone id="u" cy={TOP} from={17.5} to={162.5} stops={UPPER} />
      <polygon points={Array.from({ length: 40 }, (_, i) => rim(i * 9, TOP).map((v) => v.toFixed(1)).join(",")).join(" ")} fill="#a3a3a3" />
      <Cone id="l" cy={BOTTOM} from={-17} to={197} stops={LOWER} />
      <path d="M779 852L808 830" stroke="#37813a" strokeWidth="6" strokeLinecap="round" />
      <path d="M775 856L823 873" stroke="#b85555" strokeWidth="6" strokeLinecap="round" />
      <path d="M776 855L823 872" stroke="#f08585" strokeWidth="3" />
      <path d="M773.500 806V855" stroke="#2f558f" strokeWidth="7" strokeLinecap="round" />
      <path d="M773 806V855" stroke="#4570b3" strokeWidth="3" />
      <circle cx="773.500" cy="805" r="2.500" fill="#8fc0f5" />
      <path d="M771 784.500H786.500L771.500 799.500H786" stroke="#0a66f5" strokeWidth="1.200" />
      <path d="M805 810L811.500 817V825M819 810L811.500 817" stroke="#12ad12" />
      <path d="M820 854L835 868M835 854L820 868" stroke="#ee2b2b" />
      <path d="M998 737L1086 767" stroke="#f07f7f" />
      <path d="M1007 762L1067 717" stroke="#83e883" />
      <path d="M1026.500 686V777" stroke="#7d77e8" strokeWidth="1.300" />
      <rect x="1023.500" y="743.500" width="6" height="6" fill="#222831" stroke="#fff" />
    </svg>
  );
}

function ViewCube() {
  return (
    <svg width="148" height="120" viewBox="1360 300 148 120" className="absolute top-[71px] right-[12px]" fill="none" aria-label="View cube">
      <ellipse cx="1432" cy="377" rx="61" ry="34" stroke="#474c54" strokeWidth="14" />
      <path d="M1394 327L1425 308L1468 319L1439 341Z" fill="#b2b4b6" />
      <path d="M1394 327L1439 341V388L1397 371Z" fill="#a3a5a8" />
      <path d="M1439 341L1468 319L1466 362L1439 388Z" fill="#94969a" />
      <path d="M1394 327L1439 341L1468 319M1439 341V388" stroke="#5c5f63" strokeDasharray="5 2" />
      <rect x="1432" y="335" width="12" height="12" rx="2" fill="#8a9099" />
      <g fontFamily="Open Sans, sans-serif" fontWeight="700" textAnchor="middle">
        <text transform="matrix(.98 .2 -.35 .6 1432 327)" fontSize="12" fill="#4a4e55">TOP</text>
        <text transform="matrix(.96 .25 0 1 1417 362)" fontSize="11" fill="#4a4e55">FRONT</text>
        <text transform="matrix(.72 -.55 0 1 1454 358)" fontSize="11" fill="#4a4e55">RIGHT</text>
        <text transform="matrix(1 .2 -.5 .8 1382 355)" fontSize="18" fill="#a9adb2">W</text>
        <text transform="matrix(1 .2 -.4 .9 1389 410)" fontSize="20" fill="#b5b8bc">S</text>
        <text transform="matrix(1 .2 -.4 .9 1487 398)" fontSize="20" fill="#b5b8bc">E</text>
      </g>
      <path d="M1468 347L1471 341" stroke="#a9adb2" strokeWidth="2" />
    </svg>
  );
}

function NavBar() {
  const c = "#41464d";
  return (
    <div className="absolute top-[262px] right-[3px] flex h-[259px] w-[40px] flex-col items-center rounded-sm bg-[#596065] shadow">
      <svg width="40" height="259" viewBox="0 0 40 251" preserveAspectRatio="none" fill="none" stroke={c} strokeWidth="1.800" aria-label="Navigation bar">
        <circle cx="33" cy="5" r="4.500" strokeWidth="1" /><path d="M31 3L35 7M35 3L31 7" strokeWidth="1" />
        <path d="M20 21A13 13 0 1 0 33 34V21Z" /><circle cx="20" cy="34" r="8" /><path d="M14 40L10 44M26 40L30 44" />
        <path d="M17 57H24L20.500 61Z" fill={c} stroke="none" /><path d="M3 66H37" strokeWidth=".6" stroke="#6c7278" />
        <path d="M14 97L7 84Q5 81 9 83L13 87L11 75Q12 72 14 75L17 84L17 72Q19 70 20 73L21 84L24 73Q26 72 26 75L25 86L30 78Q33 77 32 80L27 95V98H14Z" />
        <path d="M6 105L20 121M24 105L6 122M6 110V105H11M19 105H24V110M6 117V122H11" /><circle cx="26" cy="123" r="6" /><path d="M30 127L34 131" strokeWidth="4" />
        <path d="M17 141H24L20.500 145Z" fill={c} stroke="none" />
        <path d="M20 150L16 155H18V176H22V155H24Z" /><path d="M14 160Q4 164 7 168Q18 173 31 168Q37 163 26 160M14 165L9 169L14 173" />
        <path d="M17 187H24L20.500 191Z" fill={c} stroke="none" /><path d="M3 196H37" strokeWidth=".6" stroke="#6c7278" />
        <path d="M6 201H13V208H6ZM16 201H23V208H16ZM26 201H33V208H26ZM6 212H25V228H6Z" /><path d="M11 215L20 220L11 225Z" fill={c} stroke="none" />
        <circle cx="33" cy="244" r="4.500" strokeWidth="1" /><path d="M31 244H35" />
      </svg>
    </div>
  );
}

function CommandLine() {
  return (
    <div className="absolute right-[277px] bottom-0 left-[275px] font-['Liberation_Mono',monospace] text-[15px]">
      <div className="mb-[5px] ml-[79px] flex flex-col items-start gap-[6px] leading-[19px]">
        <span className="rounded-sm bg-[#4b4e52] px-[3px] text-[#a7a9ab]">Command:</span>
        <span className="rounded-sm bg-[#525558] px-[3px] text-[#c3c5c6]">Command:</span>
        <span className="rounded-sm bg-[#585b5d] px-[3px] text-[#e3e4e5]">Command:</span>
      </div>
      <div className="flex h-[33px] items-center bg-[#2a2f3b]">
        <Ic w={6} h={22} className="ml-[5px]"><path d="M1 0V22M5 0V22" stroke="#c3c7cc" strokeWidth="2" strokeDasharray="2 2" /></Ic>
        <button aria-label="Close command line" className="ml-[8px]"><Ic w={11} h={11}><path d="M1 1L10 10M10 1L1 10" stroke="#c6cad0" strokeWidth="1.800" /></Ic></button>
        <button aria-label="Customize" className="mr-[6px] ml-[17px]"><Ic w={19} h={19}><path d="M2 17L11 8" stroke={G} strokeWidth="3.500" strokeLinecap="round" /><path d="M10 9Q8 4 12 1L16 0L13 4L15 6L19 4Q19 9 15 10Z" fill={G} /></Ic></button>
        <div className="flex h-[32px] grow items-center rounded-sm bg-[#bbbcbe] px-[5px]">
          <Ic w={20} h={16}><rect x=".5" y=".5" width="19" height="15" stroke="#555" fill="#c9cacb" /><rect width="20" height="4" fill="#555" /><path d="M3 7L6 9.500L3 12M8 12.500H12" stroke="#444" /></Ic>
          <span className="ml-[3px]"><Down w={9} h={5} color="#4a4a4a" /></span>
          <input aria-label="Command" placeholder="Type a command" className="ml-[8px] grow bg-transparent pt-[2px] italic outline-none placeholder:text-[#5b5e61]" />
          <Ic w={9} h={5}><path d="M0 5L4.500 0L9 5Z" fill="#4a4a4a" /></Ic>
        </div>
      </div>
    </div>
  );
}

function Viewport() {
  return (
    <main className="relative my-[5px] min-w-0 flex-1 overflow-hidden bg-[#222831]">
      <Scene />
      <button className="absolute top-[5px] left-[5px] text-sm text-[#d9dadc]">[−][Custom View][Realistic]</button>
      <div className="absolute top-[10px] right-[11px] flex items-end gap-[12px]">
        <button aria-label="Minimize view"><Ic w={13} h={13}><rect y="8" width="13" height="5" fill="#f2f2f2" /></Ic></button>
        <button aria-label="Restore view"><Ic w={13} h={13}><rect x="1" y="4" width="8" height="8" stroke="#f2f2f2" strokeWidth="2.200" /><path d="M4 1H12V9" stroke="#f2f2f2" strokeWidth="1.600" /></Ic></button>
        <button aria-label="Close view"><Ic w={12} h={12}><path d="M1 1L11 11M11 1L1 11" stroke="#f2f2f2" strokeWidth="2.800" /></Ic></button>
      </div>
      <ViewCube />
      <button className="absolute top-[211px] right-[61px] flex h-[20px] w-[56px] items-center justify-center gap-[7px] rounded border border-[#b4b7c2] bg-[#91949f] font-['Liberation_Sans',sans-serif] text-[13px] text-[#50545e]">
        WCS<Ic w={10} h={6}><path d="M1 1H9L5 5Z" stroke="#c2c5cc" /></Ic>
      </button>
      <NavBar />
      <CommandLine />
    </main>
  );
}

/* ---------- layer manager ---------- */

const LAYERS = [
  { name: "0", label: "wh...", color: "#ffffff", current: false },
  { name: "Cónicas", label: "wh...", color: "#ffffff", current: true },
  { name: "Circulo", label: "red", color: "#ff0000", current: false },
  { name: "Parabola", label: "yel...", color: "#ffff00", current: false },
  { name: "Elipse", label: "gre...", color: "#00ff00", current: false },
  { name: "Iperbole", label: "cyan", color: "#00ffff", current: false },
];

const head = "border-r border-[#2e343f] bg-[#474f60] p-0 text-left font-normal whitespace-nowrap";
const cell = "p-0 whitespace-nowrap";
const Chevrons = () => <Ic w={15} h={12}><path d="M1 1L6 6L1 11M8 1L13 6L8 11" stroke={G} strokeWidth="2.200" /></Ic>;
const Badge = ({ children }: { children: ReactNode }) => <Ic w={20} h={20}><Sheets />{children}</Ic>;

function LayerManager() {
  return (
    <aside className="flex w-[393px] shrink-0 flex-col pl-[5px] text-sm text-[#e2e4e6]">
      <h2 className="mt-[8px] flex h-[27px] items-center gap-[7px] rounded-t-md bg-[#2e343f] pb-[2px] pl-[9px] font-normal"><Grip />LAYER PROPERTIES MANAGER</h2>
      <div className="flex h-[36px] items-start justify-between pt-[8px]">
        <span className="pt-[5px] pl-[6px]">Current layer: Cónicas</span>
        <div className="flex h-[20px] w-[156px] items-center bg-[#4d586b]">
          <input aria-label="Search for layer" placeholder="Search for layer" className="min-w-0 grow bg-transparent outline-none placeholder:text-[#aeb3bb]" />
          <span className="mr-[3px]"><Lens size={15} /></span>
        </div>
      </div>
      <div className="flex h-[28px] items-center pb-px pl-[3px]">
        <button aria-label="New property filter"><Ic w={20} h={19}><path d="M0 0H7L9 2H18V13H0Z" fill={G} /><path d="M0 3.500H18" stroke="#3b4454" strokeWidth=".6" /><path d="M10 9H20L17 13V17L14 19V13Z" fill={G} stroke="#3b4454" strokeWidth=".8" /></Ic></button>
        <button aria-label="New group filter" className="ml-[7px]"><Ic w={18} h={15}><path d="M0 0H7L9 2.500H18V15H0Z" fill={G} /></Ic></button>
        <span className="mx-[8px] h-[21px] w-px bg-[#20252d]" />
        <button aria-label="Layer states"><Ic w={20} h={20}><path d="M7 1H17L12 7H1Z" fill={G} /><path d="M3 9H9V11H1Z" fill={G} /><rect x="9" y="7" width="10" height="12" fill="#f0f0f0" /><rect x="11" y="9" width="6" height="4" fill={B} stroke="#333" strokeWidth=".8" /><path d="M11 16H17" stroke="#444" /></Ic></button>
        <div className="ml-[12px] flex gap-[7px]">
          <button aria-label="New layer"><Badge><Star x={9} y={10} s={0.5} /></Badge></button>
          <button aria-label="New frozen layer"><Badge><path d="M15 11V20M11 13L19 18M19 13L11 18" stroke="#6fc9d2" strokeWidth="1.500" /></Badge></button>
          <button aria-label="Delete layer"><Badge><path d="M12 13L18 19M18 13L12 19" stroke="#f0575b" strokeWidth="2.200" /></Badge></button>
          <button aria-label="Set current"><Badge><path d="M10 15L13 18L19 12" stroke="#4fd07a" strokeWidth="2.200" /></Badge></button>
        </div>
        <div className="mr-[14px] ml-auto flex gap-[7px]">
          <button aria-label="Refresh"><Ic w={20} h={20}><path d="M2 9A8 8 0 0 1 16 5M18 11A8 8 0 0 1 4 15" stroke="#6bd78b" strokeWidth="2.400" /><path d="M19 1V9H12ZM1 19V11H8Z" fill="#6bd78b" /></Ic></button>
          <button aria-label="Override"><Ic w={20} h={20}><path d="M6 8H19L13 18H1Z" fill="#70767f" /><rect x="1" y="2" width="11" height="12" fill={G} /></Ic></button>
          <button aria-label="Settings"><Gear size={20} /></button>
        </div>
      </div>
      <div className="flex min-h-0 grow">
        <div className="flex w-[33px] shrink-0 flex-col items-center justify-between border border-[#2e343f] py-[7px]">
          <button aria-label="Expand filters" className="mt-px ml-[4px]"><Chevrons /></button>
          <button aria-label="Expand filter tree" className="ml-[4px]"><Chevrons /></button>
        </div>
        <div className="ml-[5px] flex min-w-0 grow flex-col">
          <table className="w-full table-fixed border-separate border-spacing-0">
            <colgroup>
              <col className="w-[23px]" /><col className="w-[91px]" /><col className="w-[3px]" /><col className="w-[23px]" /><col className="w-[23px]" /><col className="w-[23px]" /><col className="w-[23px]" /><col className="w-[60px]" /><col />
            </colgroup>
            <thead>
              <tr className="h-[29px]">
                <th scope="col" className={`${head} pl-[5px]`}>S...</th>
                <th scope="col" className={`${head} pl-[5px]`}><span className="flex items-center justify-between pr-[2px]">Name<Ic w={8} h={4}><path d="M0 4L4 0L8 4Z" fill={G} /></Ic></span></th>
                <th className="bg-[#2e343f] p-0" aria-hidden="true" />
                <th scope="col" className={`${head} overflow-hidden pl-[4px]`}>O..</th>
                <th scope="col" className={`${head} overflow-hidden pl-[5px]`}>F...</th>
                <th scope="col" className={`${head} overflow-hidden pl-[5px]`}>L...</th>
                <th scope="col" className={`${head} overflow-hidden pl-[4px]`}>P...</th>
                <th scope="col" className={`${head} pl-[5px]`}>Color</th>
                <th scope="col" className={`${head} pl-[5px]`}>Linetype</th>
              </tr>
            </thead>
            <tbody>
              {LAYERS.map((l) => (
                <tr key={l.name} className={l.current ? "h-[23px] bg-[#7486a5]" : "h-[23px]"}>
                  <td className={`${cell} pl-[3px]`}>
                    {l.current
                      ? <Ic w={16} h={12}><path d="M1 6L5.500 10.500L14 1" stroke="#4fd07a" strokeWidth="2.500" /></Ic>
                      : <Ic w={16} h={8}><path d="M5 0H16L11 8H0Z" fill={B} /></Ic>}
                  </td>
                  <td className={`${cell} pl-[5px]`}>{l.name}</td>
                  <td className="bg-[#2e343f] p-0" />
                  <td className={`${cell} pl-[5px]`}><Ic w={11} h={16} vb="0 0 13 19"><Bulb x={0} y={0} /></Ic></td>
                  <td className={`${cell} pl-[3px]`}><Ic w={16} h={16} vb="0 0 18 18"><Sun x={0} y={0} s={1} /></Ic></td>
                  <td className={`${cell} pl-[3px]`}><Ic w={15} h={16} vb="0 0 18 19"><OpenLock x={0} y={0} /></Ic></td>
                  <td className={`${cell} pl-[3px]`}><Ic w={16} h={16} vb="0 0 20 20"><Printer /></Ic></td>
                  <td className={`${cell} pl-[3px]`}><span className="flex items-center gap-[4px]"><Ic w={15} h={15}><rect x=".5" y=".5" width="14" height="14" fill={l.color} stroke="#ececec" /></Ic>{l.label}</span></td>
                  <td className={`${cell} pl-[3px]`}>Continu...</td>
                </tr>
              ))}
            </tbody>
          </table>
          <div className="ml-[114px] w-[3px] grow bg-[#2e343f]" />
          <div className="flex h-[21px] shrink-0 items-center bg-[#f0f0f0]"><span className="ml-[21px] h-[3px] w-[105px] rounded bg-[#868686]" /></div>
        </div>
      </div>
      <div className="flex h-[56px] shrink-0 items-center pt-[6px] pl-[2px]">
        <button aria-label="Filter options" className="flex items-center gap-[4px]">
          <Ic w={20} h={17}><path d="M0 0H6L8 2H16V15H0Z" fill={G} /><Bolt x={9} y={6} /></Ic><Down />
        </button>
        <span className="ml-[10px]">All: 6 layers displayed of 6 total layers</span>
      </div>
    </aside>
  );
}

/* ---------- bottom bars ---------- */

const sb = "flex h-[30px] w-[30px] items-center justify-center";
const sbOn = "flex h-[30px] w-[29px] items-center justify-center bg-[#5b8ec7]";
const sg = "flex items-center bg-[#3b4454]";

const Compass = ({ children }: { children?: ReactNode }) => (
  <Ic w={20} h={20}><path d="M9 1L13 11L17 20L9 14L1 20L5 11Z" fill={G} />{children}</Ic>
);

function BottomBar() {
  return (
    <footer className="flex h-[40px] shrink-0 items-start justify-between pr-[5px] pl-[24px] text-sm text-[#e9e9e9]">
      <div className="flex h-[31px] items-center">
        <button aria-label="Layouts menu"><Burger /></button>
        <button className="ml-[11px] flex h-[31px] w-[86px] items-center justify-center bg-[#3b4454] font-bold text-white [clip-path:polygon(12px_0,100%_0,calc(100%-12px)_100%,0_100%)]">Model</button>
        <button className="ml-[9px] w-[51px]">Layout1</button>
        <span className="ml-[12px]"><Slash /></span>
        <button className="ml-[11px] w-[51px]">Layout2</button>
        <span className="ml-[11px]"><Slash /></span>
        <button aria-label="New layout" className="ml-[13px]"><Plus /></button>
        <span className="ml-[12px]"><Slash /></span>
      </div>
      <div className="mt-[2px] flex gap-[3px]">
        <button className={`${sg} h-[30px] w-[59px] justify-center`}>MODEL</button>
        <div className={sg}>
          <button aria-label="Grid" className={sbOn}><Ic w={20} h={20}><path d="M5 0V20M10 0V20M15 0V20M0 5H20M0 10H20M0 15H20" stroke="#fff" strokeWidth="1.200" /></Ic></button>
          <button aria-label="Snap" className={sb}><Ic w={16} h={16}><path d="M0 1.500H16M0 8H16M0 14.500H16" stroke={G} strokeWidth="2.500" strokeDasharray="3 3.500" /></Ic></button>
          <button aria-label="Snap options" className="flex w-[21px] justify-center"><Down w={9} h={5} /></button>
        </div>
        <div className={sg}>
          <button aria-label="Ortho" className={sb}><Ic w={20} h={20}><path d="M1 0V19H20M1 13H7V19" stroke={G} /></Ic></button>
          <button aria-label="Polar" className={`${sb} ml-[2px]`}><Ic w={20} h={18}><circle cx="8" cy="10" r="7.500" stroke={G} /><path d="M8 10H20M8 10L17 1" stroke={G} /></Ic></button>
          <button aria-label="Polar options" className="flex w-[18px] justify-center"><Down w={9} h={5} /></button>
          <button aria-label="Isodraft" className={sb}><Ic w={16} h={20}><path d="M9 0V20" stroke="#5a9a62" strokeWidth="1.200" /><path d="M1 3L15 17" stroke="#c65656" strokeWidth="1.200" /></Ic></button>
          <button aria-label="Isodraft options" className="flex w-[20px] justify-center"><Down w={9} h={5} /></button>
        </div>
        <div className={`${sg} gap-[2px]`}>
          <button aria-label="Object tracking" className={sbOn}><Ic w={20} h={20}><path d="M19 1L1 18H20" stroke="#fff" strokeWidth="1.200" /><rect x="7" y="9" width="4" height="4" fill="#fff" /></Ic></button>
          <button aria-label="Object snap" className={sbOn}><Ic w={20} h={20}><rect x="4" y="4" width="15" height="15" stroke="#fff" strokeWidth="1.200" /><rect x="1" y="1" width="5" height="5" fill="#5b8ec7" stroke="#fff" /></Ic></button>
          <button aria-label="Object snap options" className="flex w-[17px] justify-center"><Down w={9} h={5} /></button>
        </div>
        <div className={sg}>
          <button aria-label="Annotation visibility" className={sbOn}><Compass><circle cx="16" cy="4" r="3" stroke="#fff" strokeWidth="1.200" /></Compass></button>
          <button aria-label="Auto scale" className={sb}><Compass><path d="M17 0L13 5H16L14 9L19 4H16Z" fill="#fff" /></Compass></button>
          <button aria-label="Annotation" className={sb}><Compass /></button>
          <button className="ml-[6px] flex w-[36px] items-center gap-[4px]">1:1<Down w={9} h={5} /></button>
        </div>
        <div className={sg}>
          <button aria-label="Workspace" className={sb}><Gear size={20} /></button>
          <button aria-label="Workspace options" className="flex w-[20px] justify-center"><Down w={9} h={5} /></button>
          <span className="h-[30px] w-px bg-[#222831]" />
          <button aria-label="Annotation monitor" className={sb}><Plus /></button>
        </div>
        <button aria-label="Isolate objects" className={`${sg} ${sb}`}><Ic w={20} h={20}><rect x="1" y="1" width="6" height="7" stroke={G} /><circle cx="15" cy="8" r="4" stroke={G} /><path d="M8 12L12 19H4Z" stroke={G} /></Ic></button>
        <span className={`${sg} w-[3px]`} />
        <button aria-label="Clean screen" className={`${sg} ${sb}`}><Ic w={20} h={15}><rect x=".5" y=".5" width="19" height="14" stroke={G} /><path d="M12 6L16 3M4 12L8 9M13 3H16.500V6M3.500 9V12H7" stroke={G} strokeWidth="1.300" /></Ic></button>
        <button aria-label="Customization" className={`${sg} ${sb}`}><Burger /></button>
      </div>
    </footer>
  );
}

function EditorStatus() {
  return (
    <div className="flex h-[33px] shrink-0 items-end border-t border-[#cfcfcf] text-sm leading-[20px] text-[#111]">
      <div className="flex h-[30px] w-full items-center border-t-2 border-[#5b5b5b] bg-gradient-to-b from-[#cdcdcd] to-[#dcdcdc]">
        <span className="min-w-0 grow pl-[2px]">Hyper Text Markup Language file</span>
        <span className="flex w-[275px] gap-[17px] border-l border-[#b5b5b5] pl-[4px]"><span>length: 1 519</span><span>lines: 66</span></span>
        <span className="flex w-[325px] gap-[16px] border-l border-[#b5b5b5] pl-[4px]"><span>Ln: 31</span><span>Col: 94</span><span>Pos: 879</span></span>
        <span className="w-[138px] border-l border-[#b5b5b5] pl-[4px]">Windows (CR LF)</span>
        <span className="w-[150px] border-l border-[#b5b5b5] pl-[4px]">UTF-8</span>
        <span className="w-[38px] border-l border-[#b5b5b5] pl-[4px]">INS</span>
        <span className="w-[21px] border-l border-[#b5b5b5]">&nbsp;</span>
      </div>
    </div>
  );
}

export default function App() {
  return (
    <div className="flex h-screen flex-col bg-[#d4d4d4] font-['Open_Sans','Noto_Sans',sans-serif]">
      <div className="mr-px flex min-h-0 flex-1 flex-col rounded-xl border border-[#0a93dc] bg-[#222831]">
        <TitleBar />
        <RibbonTabs />
        <Ribbon />
        <DocTabs />
        <div className="mx-[4px] flex min-h-0 flex-1 bg-[#3b4454]">
          <PropertiesPalette />
          <Viewport />
          <LayerManager />
        </div>
        <BottomBar />
      </div>
      <EditorStatus />
    </div>
  );
}
